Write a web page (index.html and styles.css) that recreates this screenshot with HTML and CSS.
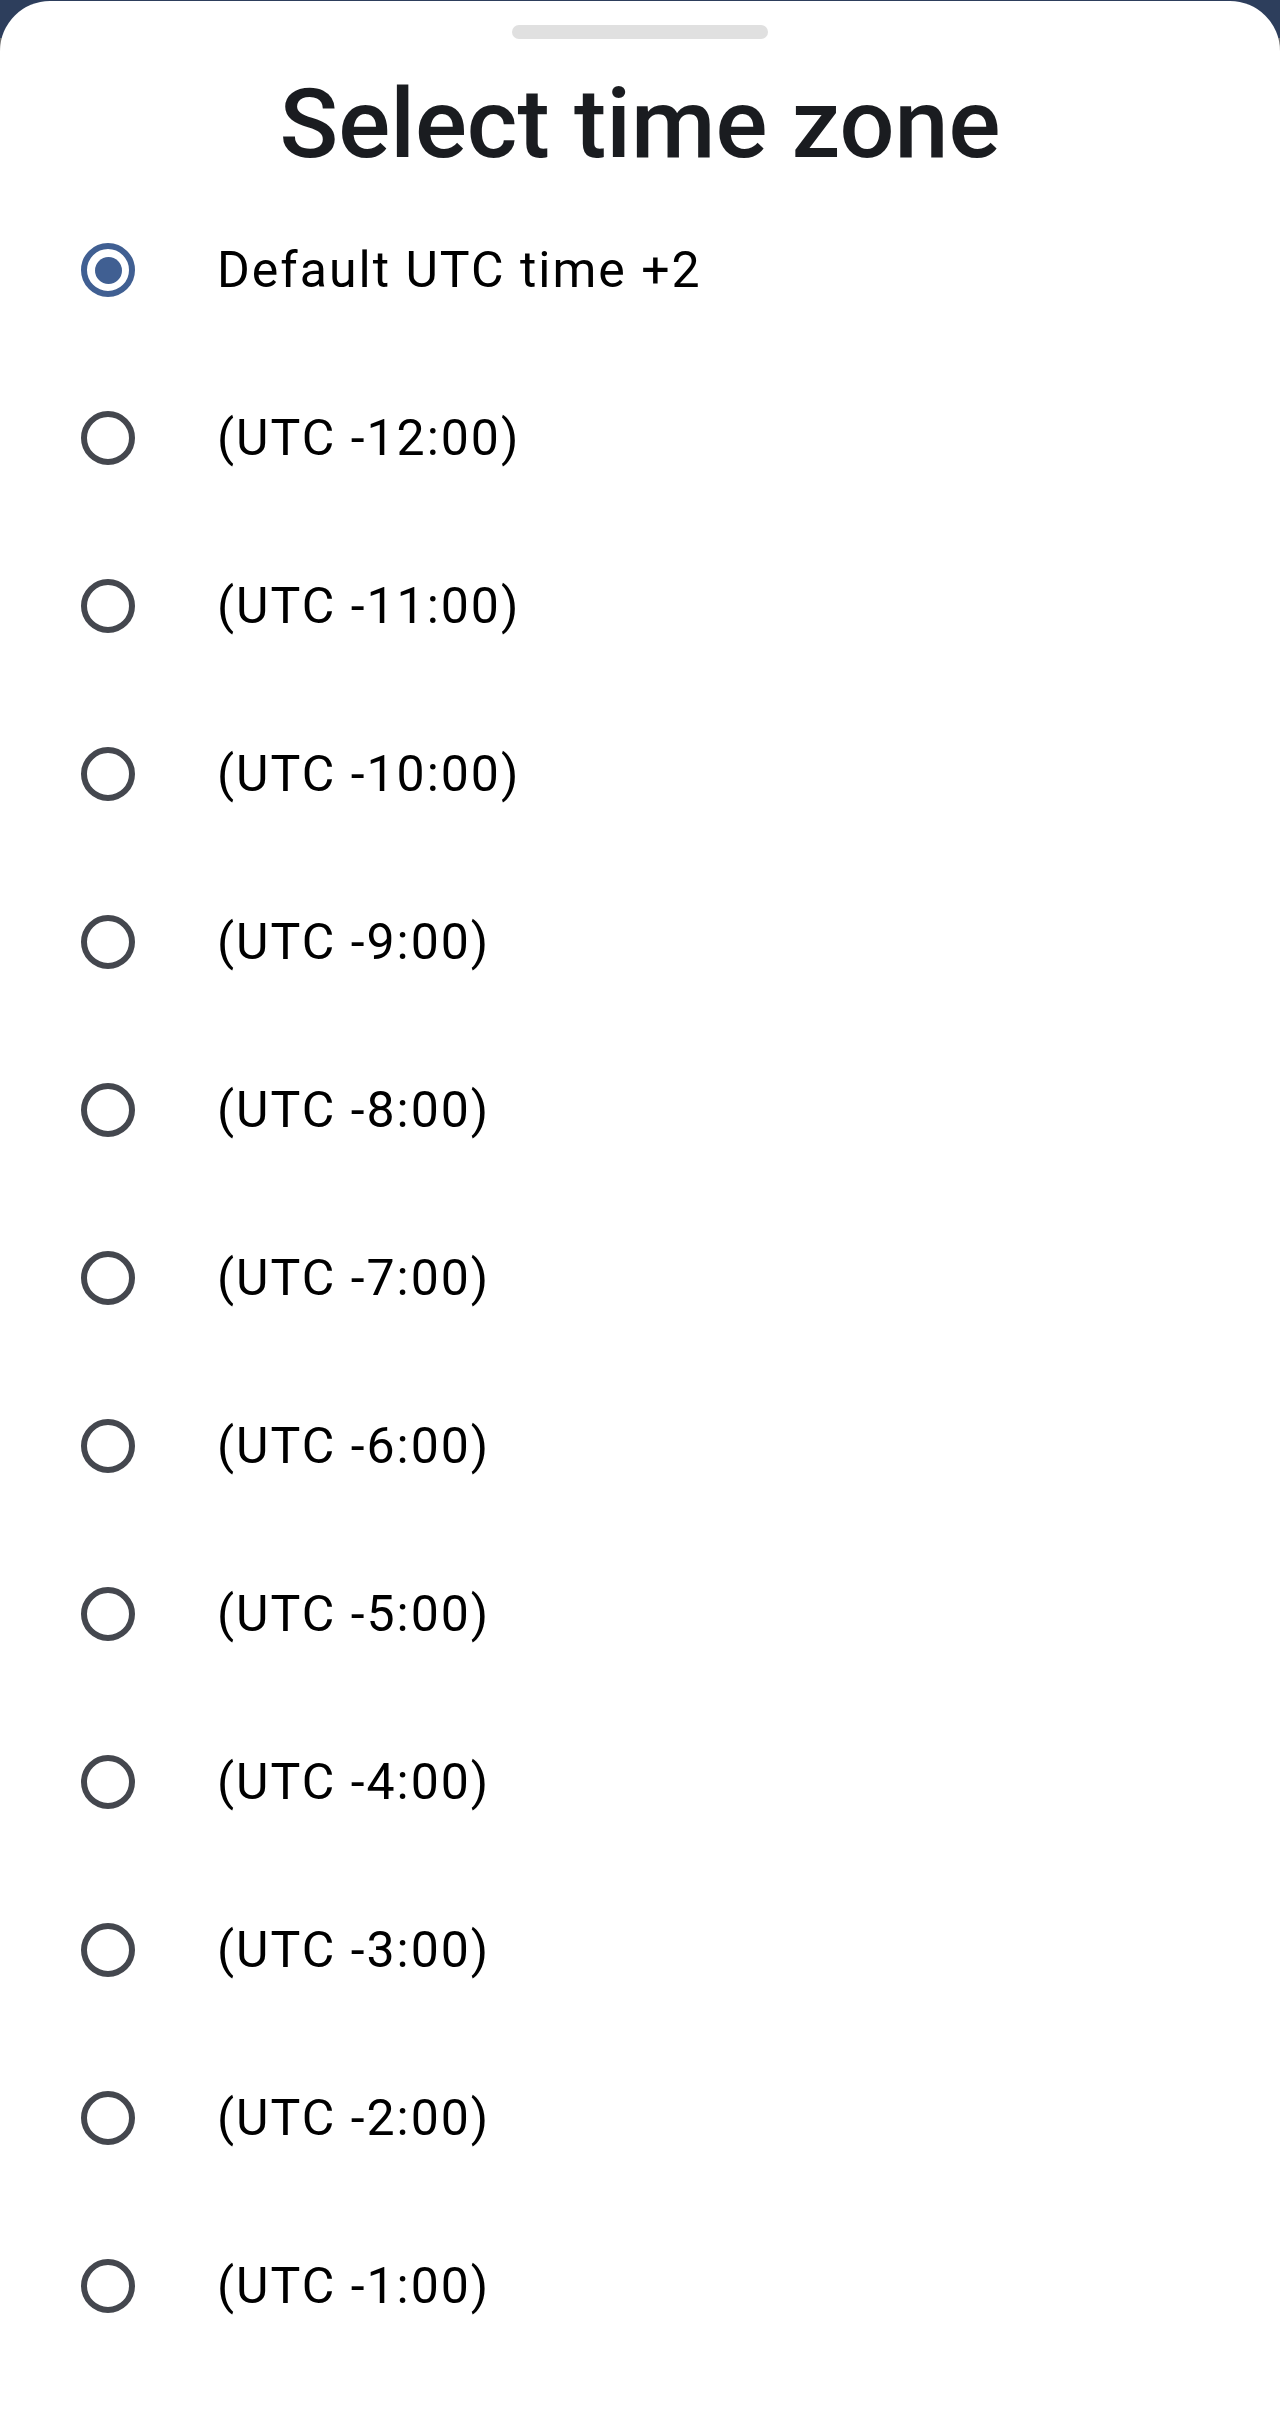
FILE: index.html
```html
<!DOCTYPE html>
<html lang="en">
<head>
<meta charset="utf-8">
<title>Select time zone</title>
<link rel="stylesheet" href="styles.css">
</head>
<body>
<div class="sheet">
  <div class="handle"></div>
  <h1 class="title">Select time zone</h1>
  <ul class="options">
    <li class="option selected"><span class="radio"></span><span class="label">Default UTC time +2</span></li>
    <li class="option"><span class="radio"></span><span class="label">(UTC -12:00)</span></li>
    <li class="option"><span class="radio"></span><span class="label">(UTC -11:00)</span></li>
    <li class="option"><span class="radio"></span><span class="label">(UTC -10:00)</span></li>
    <li class="option"><span class="radio"></span><span class="label">(UTC -9:00)</span></li>
    <li class="option"><span class="radio"></span><span class="label">(UTC -8:00)</span></li>
    <li class="option"><span class="radio"></span><span class="label">(UTC -7:00)</span></li>
    <li class="option"><span class="radio"></span><span class="label">(UTC -6:00)</span></li>
    <li class="option"><span class="radio"></span><span class="label">(UTC -5:00)</span></li>
    <li class="option"><span class="radio"></span><span class="label">(UTC -4:00)</span></li>
    <li class="option"><span class="radio"></span><span class="label">(UTC -3:00)</span></li>
    <li class="option"><span class="radio"></span><span class="label">(UTC -2:00)</span></li>
    <li class="option"><span class="radio"></span><span class="label">(UTC -1:00)</span></li>
  </ul>
</div>
</body>
</html>
```
FILE: styles.css
```css
html, body {
  margin: 0;
  padding: 0;
}
body {
  background: linear-gradient(#2d3e5c 0 38px, #6f6f6f 38px);
  font-family: Roboto, "Noto Sans", sans-serif;
  height: 2415px;
  overflow: hidden;
}
.sheet {
  margin-top: 1px;
  background: #ffffff;
  border-radius: 50px 50px 0 0;
  height: 2414px;
  display: flex;
  flex-direction: column;
}
.handle {
  align-self: center;
  width: 256px;
  height: 14px;
  margin-top: 24px;
  border-radius: 7px;
  background: #e0e0e0;
}
.title {
  margin: 29px 0 0;
  text-align: center;
  font-size: 97px;
  line-height: 112px;
  font-weight: 500;
  color: #1a1c20;
}
.options {
  list-style: none;
  margin: 6px 0 0;
  padding: 0;
}
.option {
  height: 168px;
  display: flex;
  align-items: center;
  padding-left: 81px;
}
.radio {
  box-sizing: border-box;
  width: 54px;
  height: 54px;
  border: 6px solid #44474e;
  border-radius: 50%;
  flex: none;
  display: flex;
  align-items: center;
  justify-content: center;
}
.option.selected .radio {
  border-color: #405f92;
}
.option.selected .radio::after {
  content: "";
  width: 27px;
  height: 27px;
  border-radius: 50%;
  background: #405f92;
}
.label {
  margin-left: 82px;
  font-size: 50px;
  color: #000000;
  letter-spacing: 2px;
}
```
